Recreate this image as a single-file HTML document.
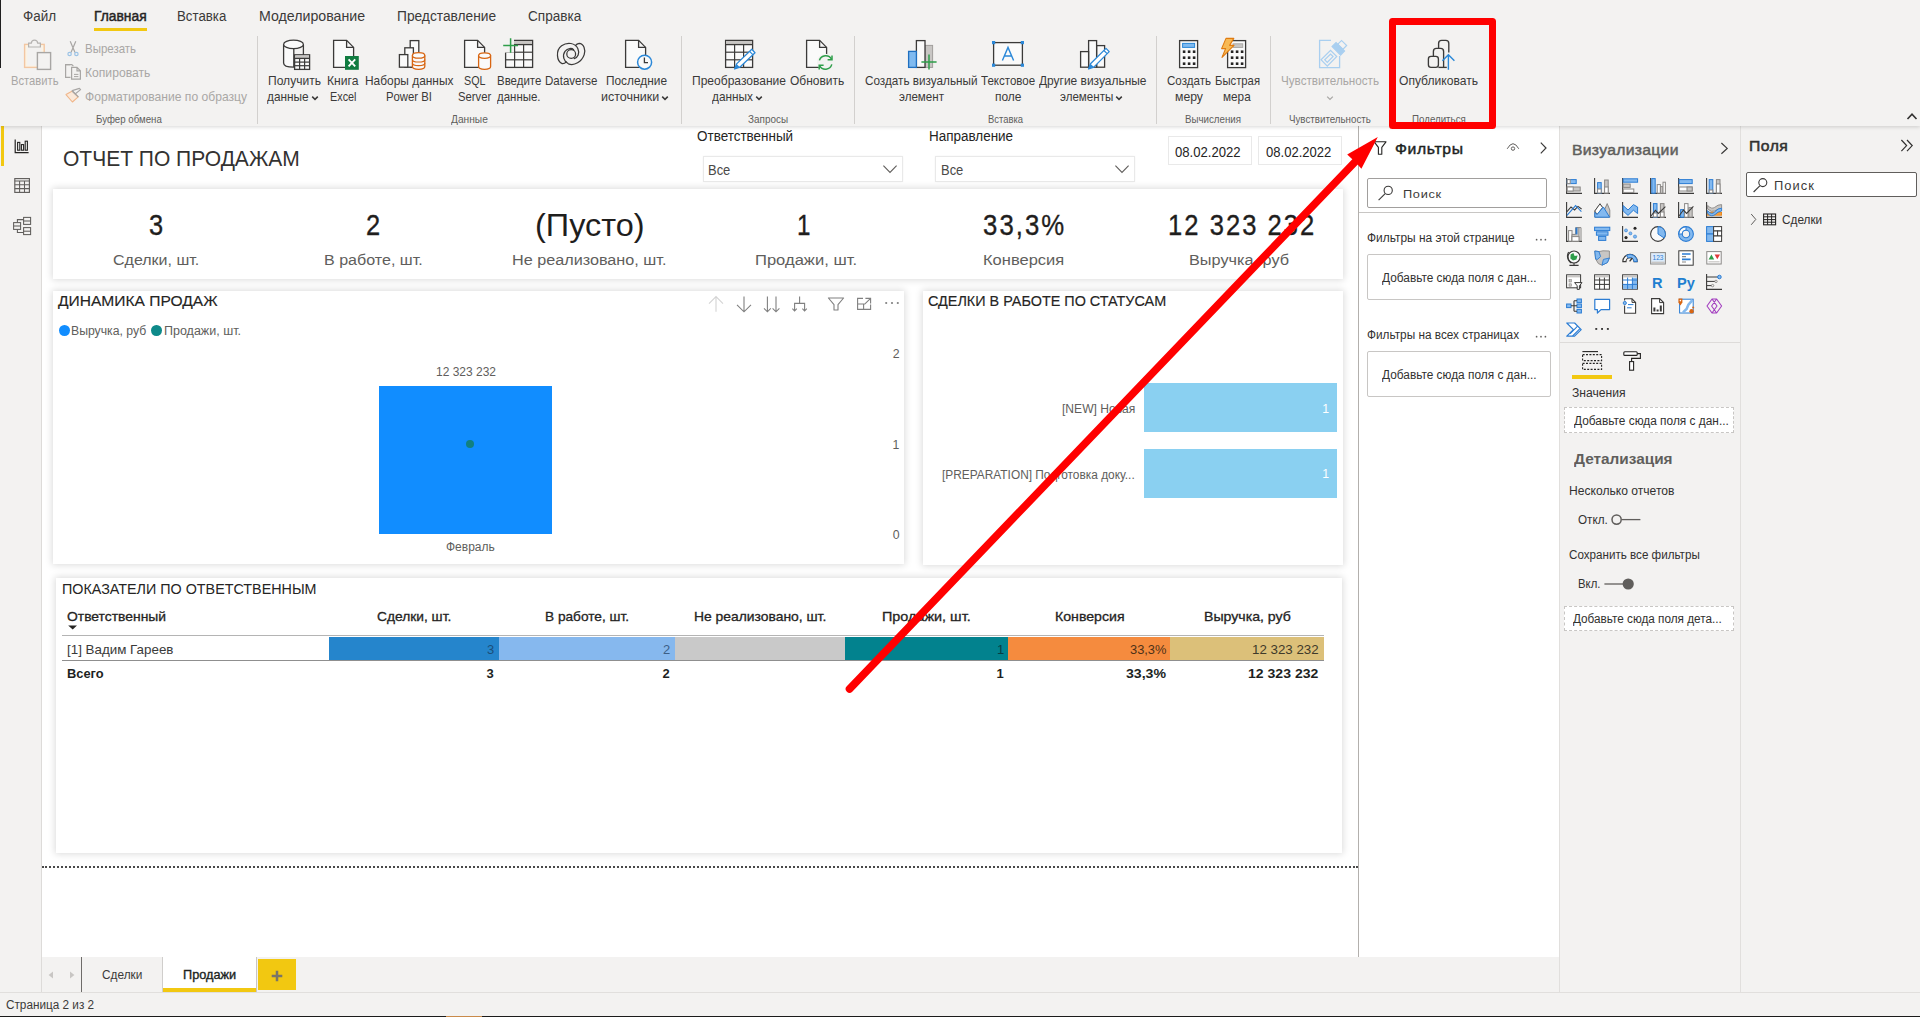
<!DOCTYPE html><html lang="ru"><head><meta charset="utf-8"><title>Power BI Desktop</title><style>
html,body{margin:0;padding:0}
body{width:1920px;height:1017px;overflow:hidden;position:relative;background:#f3f2f1;font-family:"Liberation Sans",sans-serif;}
.b{position:absolute;display:block}
.t{position:absolute;white-space:nowrap;transform-origin:0 0;z-index:10;-webkit-font-smoothing:antialiased}

</style></head><body>
<section id="report-canvas">
<div class="b" style="left:0px;top:126px;width:41px;height:866px;background:#f3f2f1;border-right:1px solid #dddbd9;"></div>
<div class="b" style="left:1px;top:126px;width:3px;height:40px;background:#f2c811;"></div>
<div class="b" style="left:42px;top:126px;width:1316px;height:831px;background:#ffffff;"></div>
<div class="b" style="left:1358px;top:126px;width:1px;height:831px;background:#b3b0ad;"></div>
<svg class="b" style="left:0;top:126px" width="42" height="120" viewBox="0 126 42 120"><path d="M15.2 139.6 V152.6 H28.6" fill="none" stroke="#252423" stroke-width="1.2"/><rect x="17.6" y="142.4" width="2.2" height="7.8" fill="none" stroke="#252423" stroke-width="1.1"/><rect x="21.4" y="144.6" width="2.2" height="5.6" fill="none" stroke="#252423" stroke-width="1.1"/><rect x="25.2" y="141.2" width="2.2" height="9.0" fill="none" stroke="#252423" stroke-width="1.1"/><rect x="14.8" y="178.6" width="14.6" height="13.8" fill="none" stroke="#605e5c" stroke-width="1.15"/><path d="M14.8 181 H29.4 M14.8 184.8 H29.4 M14.8 188.6 H29.4 M19.6 181 V192.4 M24.5 181 V192.4" stroke="#605e5c" stroke-width="1.05"/><g fill="none" stroke="#605e5c" stroke-width="1.05"><rect x="13.6" y="222.6" width="7" height="6.8"/><path d="M13.6 226 H20.6"/><rect x="23.6" y="217.4" width="7" height="7"/><path d="M23.6 221 H30.6"/><rect x="23.6" y="227.6" width="7" height="7"/><path d="M23.6 231.2 H30.6"/><path d="M17.4 222.6 V219.6 H23.6 M17.4 229.4 V232.4 H23.6"/></g></svg>
<div class="b" style="left:702.5px;top:155.5px;width:200px;height:26.5px;background:#fff;border:1px solid #e9e9e9;box-sizing:border-box;box-shadow:0 0 2px rgba(0,0,0,.05);"></div>
<div class="b" style="left:934.5px;top:155.5px;width:200px;height:26.5px;background:#fff;border:1px solid #e9e9e9;box-sizing:border-box;box-shadow:0 0 2px rgba(0,0,0,.05);"></div>
<svg class="b" style="left:882.4px;top:164px;" width="16" height="10" viewBox="0 0 16 10"><path d="M1.4 1.6 L8 8.4 L14.6 1.6" fill="none" stroke="#605e5c" stroke-width="1.1"/></svg>
<svg class="b" style="left:1114.4px;top:164px;" width="16" height="10" viewBox="0 0 16 10"><path d="M1.4 1.6 L8 8.4 L14.6 1.6" fill="none" stroke="#605e5c" stroke-width="1.1"/></svg>
<div class="b" style="left:1167.5px;top:136.3px;width:84px;height:29.2px;background:#fff;border:1px solid #e9e9e9;box-sizing:border-box;"></div>
<div class="b" style="left:1258px;top:136.3px;width:84px;height:29.2px;background:#fff;border:1px solid #e9e9e9;box-sizing:border-box;"></div>
<div class="b" style="left:53px;top:188.5px;width:1289.5px;height:90.8px;background:#fff;box-shadow:0 0 7px 1px rgba(0,0,0,.145);"></div>
<div class="b" style="left:53.3px;top:290.7px;width:851.1px;height:273.6px;background:#fff;box-shadow:0 0 7px 1px rgba(0,0,0,.145);"></div>
<div class="b" style="left:59px;top:325.2px;width:10.8px;height:10.8px;background:#118dff;border-radius:50%;"></div>
<div class="b" style="left:151.4px;top:325.2px;width:10.8px;height:10.8px;background:#0e8a8a;border-radius:50%;"></div>
<div class="b" style="left:378.8px;top:386.3px;width:173.6px;height:148.2px;background:#118dff;"></div>
<div class="b" style="left:466px;top:440px;width:8px;height:8px;background:#12807f;border-radius:50%;"></div>
<svg class="b" style="left:700px;top:292px" width="204" height="24" viewBox="700 292 204 24"><path d="M716 311.8 V296.6 M709 303.6 L716 296.6 L723 303.6" fill="none" stroke="#d4d4d4" stroke-width="1.1"/><path d="M744 296.6 V311.8 M737 304.8 L744 311.8 L751 304.8" fill="none" stroke="#808080" stroke-width="1.1"/><path d="M767.4 296.6 V311.8 M764.0 308.40000000000003 L767.4 311.8 L770.8 308.40000000000003" fill="none" stroke="#808080" stroke-width="1.1"/><path d="M776 296.6 V311.8 M772.6 308.40000000000003 L776 311.8 L779.4 308.40000000000003" fill="none" stroke="#808080" stroke-width="1.1"/><path d="M799.6 296.6 V303.4 M794.6 310.6 V303.4 H804.6 V310.6 M792.4 308.6 L794.6 311 L796.8 308.6 M802.4 308.6 L804.6 311 L806.8 308.6" fill="none" stroke="#808080" stroke-width="1.1"/><path d="M828.4 298 H843.6 L838 304.6 V310 H834 V304.6 Z" fill="none" stroke="#808080" stroke-width="1.1" stroke-linejoin="round"/><path d="M863 298.4 H857.6 V309.4 H870.6 V304.4 M857.6 304 H863.6 V309.4 M865.4 298.4 H870.6 V303.4 M870.6 298.4 L864.4 304.4" fill="none" stroke="#808080" stroke-width="1.1"/><circle cx="886.2" cy="303" r="1.1" fill="#808080"/><circle cx="892" cy="303" r="1.1" fill="#808080"/><circle cx="897.8" cy="303" r="1.1" fill="#808080"/></svg>
<div class="b" style="left:923px;top:290.5px;width:419.5px;height:274.5px;background:#fff;box-shadow:0 0 7px 1px rgba(0,0,0,.145);"></div>
<div class="b" style="left:1144px;top:383.3px;width:193.3px;height:49.2px;background:#8ad0f1;"></div>
<div class="b" style="left:1144px;top:448.8px;width:193.3px;height:49.5px;background:#8ad0f1;"></div>
<span class="t" id="t0" style="left:62.91px;top:148.01px;font-size:22.3px;line-height:22.3px;color:#333231;transform:scaleX(0.9421);">ОТЧЕТ ПО ПРОДАЖАМ</span>
<span class="t" id="t1" style="left:696.94px;top:129.00px;font-size:14px;line-height:14px;color:#252423;transform:scaleX(0.9614);">Ответственный</span>
<span class="t" id="t2" style="left:929.44px;top:129.00px;font-size:14px;line-height:14px;color:#252423;transform:scaleX(0.9617);">Направление</span>
<span class="t" id="t3" style="left:708.24px;top:163.00px;font-size:14px;line-height:14px;color:#4a4948;transform:scaleX(0.9252);">Все</span>
<span class="t" id="t4" style="left:940.74px;top:163.00px;font-size:14px;line-height:14px;color:#4a4948;transform:scaleX(0.9252);">Все</span>
<span class="t" id="t5" style="left:1174.94px;top:145.00px;font-size:14px;line-height:14px;color:#252423;transform:scaleX(0.9364);">08.02.2022</span>
<span class="t" id="t6" style="left:1265.74px;top:145.00px;font-size:14px;line-height:14px;color:#252423;transform:scaleX(0.9321);">08.02.2022</span>
<span class="t" id="t7" style="left:149.02px;top:210.01px;font-size:30.3px;line-height:30.3px;color:#1f1e1d;-webkit-text-stroke:0.35px #1f1e1d;transform:scaleX(0.8400);">3</span>
<span class="t" id="t8" style="left:366.22px;top:210.01px;font-size:30.3px;line-height:30.3px;color:#1f1e1d;-webkit-text-stroke:0.35px #1f1e1d;transform:scaleX(0.8400);">2</span>
<span class="t" id="t9" style="left:534.62px;top:209.01px;font-size:32px;line-height:32px;color:#1f1e1d;transform:scaleX(1.0140);">(Пусто)</span>
<span class="t" id="t10" style="left:797.36px;top:210.01px;font-size:30.3px;line-height:30.3px;color:#1f1e1d;-webkit-text-stroke:0.35px #1f1e1d;transform:scaleX(0.8000);">1</span>
<span class="t" id="t11" style="left:982.59px;top:210.01px;font-size:30.3px;line-height:30.3px;color:#1f1e1d;letter-spacing:2.4px;-webkit-text-stroke:0.35px #1f1e1d;transform:scaleX(0.8507);">33,3%</span>
<span class="t" id="t12" style="left:1167.59px;top:210.01px;font-size:30.3px;line-height:30.3px;color:#1f1e1d;letter-spacing:2.4px;-webkit-text-stroke:0.35px #1f1e1d;transform:scaleX(0.8442);">12 323 232</span>
<span class="t" id="t13" style="left:113.18px;top:252.00px;font-size:15.5px;line-height:15.5px;color:#605e5c;transform:scaleX(1.0320);">Сделки, шт.</span>
<span class="t" id="t14" style="left:324.38px;top:252.00px;font-size:15.5px;line-height:15.5px;color:#605e5c;transform:scaleX(1.0358);">В работе, шт.</span>
<span class="t" id="t15" style="left:512.38px;top:252.00px;font-size:15.5px;line-height:15.5px;color:#605e5c;transform:scaleX(1.0446);">Не реализовано, шт.</span>
<span class="t" id="t16" style="left:754.88px;top:252.00px;font-size:15.5px;line-height:15.5px;color:#605e5c;transform:scaleX(1.0688);">Продажи, шт.</span>
<span class="t" id="t17" style="left:982.68px;top:252.00px;font-size:15.5px;line-height:15.5px;color:#605e5c;transform:scaleX(1.0646);">Конверсия</span>
<span class="t" id="t18" style="left:1189.38px;top:252.00px;font-size:15.5px;line-height:15.5px;color:#605e5c;transform:scaleX(1.0491);">Выручка, руб</span>
<span class="t" id="t19" style="left:57.98px;top:293.00px;font-size:15.4px;line-height:15.4px;color:#252423;-webkit-text-stroke:0.15px #252423;transform:scaleX(1.0117);">ДИНАМИКА ПРОДАЖ</span>
<span class="t" id="t20" style="left:70.51px;top:325.01px;font-size:12.3px;line-height:12.3px;color:#605e5c;transform:scaleX(0.9951);">Выручка, руб</span>
<span class="t" id="t21" style="left:163.51px;top:325.01px;font-size:12.3px;line-height:12.3px;color:#605e5c;transform:scaleX(1.0163);">Продажи, шт.</span>
<span class="t" id="t22" style="left:435.51px;top:366.00px;font-size:12.3px;line-height:12.3px;color:#605e5c;transform:scaleX(0.9746);">12 323 232</span>
<span class="t" id="t23" style="left:446.01px;top:541.01px;font-size:12.3px;line-height:12.3px;color:#605e5c;transform:scaleX(0.9760);">Февраль</span>
<span class="t" id="t24" style="left:892.73px;top:348.01px;font-size:12.3px;line-height:12.3px;color:#605e5c;transform:scaleX(1.0000);">2</span>
<span class="t" id="t25" style="left:892.48px;top:439.01px;font-size:12.3px;line-height:12.3px;color:#605e5c;transform:scaleX(1.0000);">1</span>
<span class="t" id="t26" style="left:892.73px;top:529.00px;font-size:12.3px;line-height:12.3px;color:#605e5c;transform:scaleX(1.0000);">0</span>
<span class="t" id="t27" style="left:927.98px;top:293.00px;font-size:15.4px;line-height:15.4px;color:#252423;-webkit-text-stroke:0.15px #252423;transform:scaleX(0.9351);">СДЕЛКИ В РАБОТЕ ПО СТАТУСАМ</span>
<span class="t" id="t28" style="left:1061.71px;top:403.01px;font-size:12.3px;line-height:12.3px;color:#605e5c;transform:scaleX(0.9829);">[NEW] Новая</span>
<span class="t" id="t29" style="left:942.31px;top:469.01px;font-size:12.3px;line-height:12.3px;color:#605e5c;transform:scaleX(0.9663);">[PREPARATION] Подготовка доку...</span>
<span class="t" id="t30" style="left:1322.18px;top:403.01px;font-size:12.3px;line-height:12.3px;color:#ffffff;transform:scaleX(1.0000);">1</span>
<span class="t" id="t31" style="left:1322.18px;top:468.00px;font-size:12.3px;line-height:12.3px;color:#ffffff;transform:scaleX(1.0000);">1</span>
</section>
<section id="report-table-and-footer">
<div class="b" style="left:56px;top:578px;width:1286.3px;height:275px;background:#fff;box-shadow:0 0 7px 1px rgba(0,0,0,.145);"></div>
<svg class="b" style="left:68px;top:624.6px;" width="9.4" height="5" viewBox="0 0 9.4 5"><path d="M0.2 0.4 H9.2 L4.7 4.6 Z" fill="#252423"/></svg>
<div class="b" style="left:62px;top:635px;width:1262px;height:1.4px;background:#b4b4b4;"></div>
<div class="b" style="left:62px;top:660px;width:1262px;height:1.2px;background:#8f8f8f;"></div>
<div class="b" style="left:328.6px;top:636.6px;width:170.4px;height:23.4px;background:#2585cc;"></div>
<div class="b" style="left:499px;top:636.6px;width:176px;height:23.4px;background:#86b8ee;"></div>
<div class="b" style="left:675px;top:636.6px;width:169.8px;height:23.4px;background:#c9c9c9;"></div>
<div class="b" style="left:844.8px;top:636.6px;width:163.4px;height:23.4px;background:#02828e;"></div>
<div class="b" style="left:1008.2px;top:636.6px;width:162.2px;height:23.4px;background:#f58b3e;"></div>
<div class="b" style="left:1170.4px;top:636.6px;width:153.2px;height:23.4px;background:#dcc079;"></div>
<div class="b" style="left:42px;top:865.6px;width:1316px;height:2px;border-top:2px dotted #4a4a4a;box-sizing:border-box;height:0;"></div>
<div class="b" style="left:42px;top:957px;width:1517px;height:35px;background:#f3f2f1;"></div>
<div class="b" style="left:81px;top:957px;width:1px;height:35px;background:#6e6c6a;"></div>
<svg class="b" style="left:46px;top:970px;" width="10" height="10" viewBox="0 0 10 10"><path d="M7 1.4 L2.6 5 L7 8.6 Z" fill="#c8c6c4"/></svg>
<svg class="b" style="left:67px;top:970px;" width="10" height="10" viewBox="0 0 10 10"><path d="M3 1.4 L7.4 5 L3 8.6 Z" fill="#c8c6c4"/></svg>
<div class="b" style="left:162px;top:957px;width:1px;height:35px;background:#d0cecc;"></div>
<div class="b" style="left:163px;top:957px;width:93.4px;height:31px;background:#ffffff;"></div>
<div class="b" style="left:163px;top:988px;width:93.4px;height:3.6px;background:#f2c811;"></div>
<div class="b" style="left:256.4px;top:957px;width:1px;height:35px;background:#c8c6c4;"></div>
<div class="b" style="left:257.6px;top:959.4px;width:38.2px;height:31px;background:#f2c811;"></div>
<svg class="b" style="left:270.7px;top:969.6px;" width="12" height="12" viewBox="0 0 12 12"><path d="M6 0.7 V11.3 M0.7 6 H11.3" stroke="#7a7568" stroke-width="2.5"/></svg>
<div class="b" style="left:0px;top:992px;width:1920px;height:25px;background:#f3f2f1;border-top:1px solid #e1dfdd;box-sizing:border-box;"></div>
<div class="b" style="left:0px;top:1016px;width:1920px;height:1px;background:#1b1b1b;"></div>
<div class="b" style="left:446px;top:1016px;width:36px;height:1px;background:#c98a4a;"></div>
<span class="t" id="t32" style="left:61.63px;top:582.01px;font-size:14.3px;line-height:14.3px;color:#252423;transform:scaleX(1.0023);">ПОКАЗАТЕЛИ ПО ОТВЕТСТВЕННЫМ</span>
<span class="t" id="t33" style="left:67.46px;top:610.00px;font-size:13.4px;line-height:13.4px;color:#252423;-webkit-text-stroke:0.3px #252423;transform:scaleX(1.0359);">Ответственный</span>
<span class="t" id="t34" style="left:377.06px;top:610.00px;font-size:13.4px;line-height:13.4px;color:#252423;-webkit-text-stroke:0.3px #252423;transform:scaleX(1.0287);">Сделки, шт.</span>
<span class="t" id="t35" style="left:545.46px;top:610.00px;font-size:13.4px;line-height:13.4px;color:#252423;-webkit-text-stroke:0.3px #252423;transform:scaleX(1.0196);">В работе, шт.</span>
<span class="t" id="t36" style="left:694.06px;top:610.00px;font-size:13.4px;line-height:13.4px;color:#252423;-webkit-text-stroke:0.3px #252423;transform:scaleX(1.0357);">Не реализовано, шт.</span>
<span class="t" id="t37" style="left:882.46px;top:610.00px;font-size:13.4px;line-height:13.4px;color:#252423;-webkit-text-stroke:0.3px #252423;transform:scaleX(1.0750);">Продажи, шт.</span>
<span class="t" id="t38" style="left:1054.96px;top:610.00px;font-size:13.4px;line-height:13.4px;color:#252423;-webkit-text-stroke:0.3px #252423;transform:scaleX(1.0551);">Конверсия</span>
<span class="t" id="t39" style="left:1203.66px;top:610.00px;font-size:13.4px;line-height:13.4px;color:#252423;-webkit-text-stroke:0.3px #252423;transform:scaleX(1.0544);">Выручка, руб</span>
<span class="t" id="t40" style="left:67.48px;top:643.01px;font-size:13px;line-height:13px;color:#3a3a3a;transform:scaleX(1.0284);">[1] Вадим Гареев</span>
<span class="t" id="t41" style="left:486.98px;top:643.01px;font-size:13px;line-height:13px;color:#1c4f7a;transform:scaleX(1.0000);">3</span>
<span class="t" id="t42" style="left:662.88px;top:643.01px;font-size:13px;line-height:13px;color:#3d5f86;transform:scaleX(1.0000);">2</span>
<span class="t" id="t43" style="left:996.88px;top:643.01px;font-size:13px;line-height:13px;color:#083d44;transform:scaleX(1.0000);">1</span>
<span class="t" id="t44" style="left:1129.68px;top:643.01px;font-size:13px;line-height:13px;color:#4d3118;transform:scaleX(0.9882);">33,3%</span>
<span class="t" id="t45" style="left:1251.88px;top:643.01px;font-size:13px;line-height:13px;color:#403a2a;transform:scaleX(1.0240);">12 323 232</span>
<span class="t" id="t46" style="left:67.48px;top:667.01px;font-size:13px;line-height:13px;color:#201f1e;font-weight:700;transform:scaleX(0.9890);">Всего</span>
<span class="t" id="t47" style="left:486.58px;top:667.01px;font-size:13px;line-height:13px;color:#201f1e;font-weight:700;transform:scaleX(1.0000);">3</span>
<span class="t" id="t48" style="left:662.48px;top:667.01px;font-size:13px;line-height:13px;color:#201f1e;font-weight:700;transform:scaleX(1.0000);">2</span>
<span class="t" id="t49" style="left:996.38px;top:667.01px;font-size:13px;line-height:13px;color:#201f1e;font-weight:700;transform:scaleX(1.0000);">1</span>
<span class="t" id="t50" style="left:1126.08px;top:667.01px;font-size:13px;line-height:13px;color:#201f1e;font-weight:700;transform:scaleX(1.0858);">33,3%</span>
<span class="t" id="t51" style="left:1248.18px;top:667.01px;font-size:13px;line-height:13px;color:#201f1e;font-weight:700;transform:scaleX(1.0809);">12 323 232</span>
<span class="t" id="t52" style="left:101.51px;top:969.00px;font-size:12.3px;line-height:12.3px;color:#3b3a39;transform:scaleX(0.9633);">Сделки</span>
<span class="t" id="t53" style="left:182.51px;top:969.00px;font-size:12.3px;line-height:12.3px;color:#201f1e;-webkit-text-stroke:0.35px #201f1e;transform:scaleX(1.0336);">Продажи</span>
<span class="t" id="t54" style="left:5.71px;top:999.01px;font-size:12.3px;line-height:12.3px;color:#3b3a39;transform:scaleX(0.9556);">Страница 2 из 2</span>
</section>
<section id="side-panes">
<div class="b" style="left:1359px;top:126px;width:200.4px;height:831px;background:#ffffff;"></div>
<div class="b" style="left:1559.4px;top:126px;width:1px;height:866px;background:#e1dfdd;"></div>
<div class="b" style="left:1560.4px;top:126px;width:179.6px;height:866px;background:#f3f2f1;"></div>
<div class="b" style="left:1740px;top:126px;width:1px;height:866px;background:#e1dfdd;"></div>
<div class="b" style="left:1741px;top:126px;width:179px;height:866px;background:#f3f2f1;"></div>
<div class="b" style="left:1367.2px;top:178.4px;width:179.4px;height:29.2px;background:#fff;border:1px solid #a19f9d;border-radius:2px;box-sizing:border-box;"></div>
<div class="b" style="left:1359px;top:212px;width:200.4px;height:1px;background:#c8c6c4;"></div>
<div class="b" style="left:1367.2px;top:254.2px;width:183.8px;height:45.4px;background:#fff;border:1px solid #c8c6c4;border-radius:2px;box-sizing:border-box;"></div>
<div class="b" style="left:1367.2px;top:351.2px;width:183.8px;height:45.4px;background:#fff;border:1px solid #c8c6c4;border-radius:2px;box-sizing:border-box;"></div>
<svg class="b" style="left:1359px;top:126px" width="200" height="240" viewBox="1359 126 200 240"><path d="M1374.2 141.8 H1386 L1381.8 147.4 V154.2 H1378.4 V147.4 Z" fill="none" stroke="#252423" stroke-width="1.1" stroke-linejoin="round"/><path d="M1507.2 148.8 Q1513 138.6 1518.8 148.8" fill="none" stroke="#605e5c" stroke-width="1"/><circle cx="1513" cy="148.6" r="1.7" fill="none" stroke="#605e5c" stroke-width="1"/><path d="M1540.8 142.6 L1546 148 L1540.8 153.4" fill="none" stroke="#3b3a39" stroke-width="1.2"/><circle cx="1388.2" cy="190.4" r="4.1" fill="none" stroke="#3b3a39" stroke-width="1.1"/><path d="M1385.2 193.6 L1378.6 200.2" stroke="#3b3a39" stroke-width="1.1"/><circle cx="1536.6" cy="239.7" r=".85" fill="#605e5c"/><circle cx="1541" cy="239.7" r=".85" fill="#605e5c"/><circle cx="1545.4" cy="239.7" r=".85" fill="#605e5c"/><circle cx="1536.6" cy="336.7" r=".85" fill="#605e5c"/><circle cx="1541" cy="336.7" r=".85" fill="#605e5c"/><circle cx="1545.4" cy="336.7" r=".85" fill="#605e5c"/></svg>
<svg class="b" style="left:1560px;top:126px" width="180" height="480" viewBox="1560 126 180 480"><path d="M1721.4 143 L1727.2 148.4 L1721.4 153.8" fill="none" stroke="#3b3a39" stroke-width="1.2"/><g transform="translate(1566 178)"><path d="M.6 0 V15.4 H16" fill="none" stroke="#3b3a39" stroke-width="1.1"/><rect x="1.2" y="1.6" width="9" height="4" fill="#83b9ef" stroke="#2b7cd3" stroke-width="1"/><rect x="1.2" y="1.6" width="3" height="4" fill="#ffffff" stroke="#8a8886" stroke-width="1"/><rect x="1.2" y="9" width="13" height="4" fill="#c8c6c4" stroke="#8a8886" stroke-width="1"/><rect x="1.2" y="9" width="6" height="4" fill="#ffffff" stroke="#8a8886" stroke-width="1"/></g><g transform="translate(1594 178)"><path d="M.6 0 V15.4 H16" fill="none" stroke="#3b3a39" stroke-width="1.1"/><rect x="3.6" y="4.6" width="3.6" height="10.4" fill="#83b9ef" stroke="#2b7cd3" stroke-width="1"/><rect x="3.6" y="11" width="3.6" height="4" fill="#ffffff" stroke="#8a8886" stroke-width="1"/><rect x="10.6" y="2" width="3.6" height="13" fill="#c8c6c4" stroke="#8a8886" stroke-width="1"/><rect x="10.6" y="9" width="3.6" height="6" fill="#ffffff" stroke="#8a8886" stroke-width="1"/></g><g transform="translate(1622 178)"><path d="M.6 0 V15.4 H16" fill="none" stroke="#3b3a39" stroke-width="1.1"/><rect x="1.2" y="0.8" width="14.4" height="3.4" fill="#83b9ef" stroke="#2b7cd3" stroke-width="1"/><rect x="1.2" y="6" width="7" height="3.4" fill="#c8c6c4" stroke="#8a8886" stroke-width="1"/><rect x="1.2" y="11" width="10.6" height="3.4" fill="#ffffff" stroke="#8a8886" stroke-width="1"/></g><g transform="translate(1650 178)"><path d="M.6 0 V15.4 H16" fill="none" stroke="#3b3a39" stroke-width="1.1"/><rect x="1.8" y="0.6" width="3.4" height="14.6" fill="#83b9ef" stroke="#2b7cd3" stroke-width="1"/><rect x="7.2" y="6.6" width="3.2" height="8.6" fill="#ffffff" stroke="#8a8886" stroke-width="1"/><rect x="10.4" y="8.6" width="2.6" height="6.6" fill="#c8c6c4" stroke="#8a8886" stroke-width="1"/><rect x="13" y="4.2" width="2.4" height="11" fill="#ffffff" stroke="#8a8886" stroke-width="1"/></g><g transform="translate(1678 178)"><path d="M.6 0 V15.4 H16" fill="none" stroke="#3b3a39" stroke-width="1.1"/><rect x="1.2" y="1.6" width="13" height="4" fill="#83b9ef" stroke="#2b7cd3" stroke-width="1"/><rect x="1.2" y="9" width="13" height="4" fill="#ffffff" stroke="#8a8886" stroke-width="1"/><rect x="9" y="9" width="5.2" height="4" fill="#c8c6c4" stroke="#8a8886" stroke-width="1"/></g><g transform="translate(1706 178)"><path d="M.6 0 V15.4 H16" fill="none" stroke="#3b3a39" stroke-width="1.1"/><rect x="3.2" y="1.6" width="3.6" height="13.4" fill="#83b9ef" stroke="#2b7cd3" stroke-width="1"/><rect x="3.2" y="12" width="3.6" height="3" fill="#ffffff" stroke="#8a8886" stroke-width="1"/><rect x="10.4" y="1.6" width="3.6" height="13.4" fill="#c8c6c4" stroke="#8a8886" stroke-width="1"/><rect x="10.4" y="6" width="3.6" height="9" fill="#ffffff" stroke="#8a8886" stroke-width="1"/></g><g transform="translate(1566 202)"><path d="M.6 0 V15.4 H16" fill="none" stroke="#3b3a39" stroke-width="1.1"/><path d="M1 9.6 L5 5 L8.6 8 L12 4.4 L15.6 7" fill="none" stroke="#3b3a39" stroke-width="1.1"/><path d="M1 13.4 L9.6 3.6 L15.4 9.6" fill="none" stroke="#2b7cd3" stroke-width="1.1"/></g><g transform="translate(1594 202)"><path d="M.8 15.2 V9 L6 1.8 L10.4 8 L13.2 1.6 L15.8 8 V15.2 Z" fill="#c8c6c4" stroke="#8a8886" stroke-width="1"/><path d="M.8 9 L6 1.8 L8.6 5.6 L3 12.6 Z" fill="#ffffff" stroke="#3b3a39" stroke-width=".9"/><path d="M.8 15.2 V10.4 L3 12.6 L9.4 5 L15.6 15.2 Z" fill="#83b9ef" stroke="#2b7cd3" stroke-width="1"/></g><g transform="translate(1622 202)"><path d="M.6 0 V15.4 H16" fill="none" stroke="#3b3a39" stroke-width="1.1"/><path d="M1.2 3.6 L6 8 L11.4 2.6 L15.6 5 V11.6 L11.4 8.2 L6 13.4 L1.2 9 Z" fill="#83b9ef" stroke="#2b7cd3" stroke-width="1"/></g><g transform="translate(1650 202)"><path d="M.6 0 V15.4 H16" fill="none" stroke="#3b3a39" stroke-width="1.1"/><rect x="3.4" y="1.6" width="3.6" height="13.6" fill="#83b9ef" stroke="#2b7cd3" stroke-width="1"/><rect x="3.4" y="11" width="3.6" height="4" fill="#ffffff" stroke="#8a8886" stroke-width="1"/><rect x="10.4" y="1.6" width="3.6" height="13.6" fill="#c8c6c4" stroke="#8a8886" stroke-width="1"/><rect x="10.4" y="10" width="3.6" height="5" fill="#ffffff" stroke="#8a8886" stroke-width="1"/><path d="M1 14 L5.4 8.4 L8.4 11.4 L15.4 4.6" fill="none" stroke="#3b3a39" stroke-width="1.1"/></g><g transform="translate(1678 202)"><path d="M.6 0 V15.4 H16" fill="none" stroke="#3b3a39" stroke-width="1.1"/><rect x="2.6" y="7.6" width="3.6" height="7.6" fill="#83b9ef" stroke="#2b7cd3" stroke-width="1"/><rect x="6.6" y="1.6" width="3.4" height="13.6" fill="#ffffff" stroke="#8a8886" stroke-width="1"/><rect x="10.8" y="5.6" width="3.4" height="9.6" fill="#c8c6c4" stroke="#8a8886" stroke-width="1"/><path d="M1 14 L5.4 8 L8.6 11.4 L15.4 4.4" fill="none" stroke="#3b3a39" stroke-width="1.1"/></g><g transform="translate(1706 202)"><path d="M.6 0 V15.4 H16" fill="none" stroke="#3b3a39" stroke-width="1.1"/><path d="M1.6 3.4 Q5.6 7.6 8.6 5.4 Q12 2.4 15.6 2.6 V6.4 Q12 6.6 8.6 9 Q5.4 10.6 1.6 7 Z" fill="#c8c6c4" stroke="#8a8886" stroke-width=".9"/><rect x="1.6" y="10.2" width="14" height="3" fill="#f7a03c" stroke="#e07b10" stroke-width=".8"/><path d="M1.6 8.6 Q5.6 13.4 8.6 10 Q12 6 15.6 6.2 V9 Q12 9.4 9 12.6 Q5.4 15.4 1.6 11.4 Z" fill="#83b9ef" stroke="#2b7cd3" stroke-width=".9"/></g><g transform="translate(1566 226)"><path d="M.6 0 V15.4 H16" fill="none" stroke="#3b3a39" stroke-width="1.1"/><rect x="2.6" y="4.6" width="3.4" height="10.6" fill="#ffffff" stroke="#8a8886" stroke-width="1"/><path d="M6 15.2 V8.4 H9.6 V1.6 H13 V15.2" fill="#c8c6c4" stroke="#8a8886" stroke-width="1"/><rect x="9.6" y="1.6" width="1.8" height="6.8" fill="#2b7cd3"/><rect x="6" y="10.6" width="7" height="4.6" fill="#ffffff" stroke="#8a8886" stroke-width="1"/><path d="M13 1.6 H15 V15.2" fill="none" stroke="#8a8886" stroke-width="1"/></g><g transform="translate(1594 226)"><rect x="0.6" y="1.2" width="15.2" height="3.4" fill="#83b9ef" stroke="#2b7cd3" stroke-width="1"/><rect x="2.4" y="5.8" width="11.6" height="3.4" fill="#83b9ef" stroke="#2b7cd3" stroke-width="1"/><rect x="4.6" y="10.4" width="7.2" height="4" fill="#83b9ef" stroke="#2b7cd3" stroke-width="1"/></g><g transform="translate(1622 226)"><path d="M.6 0 V15.4 H16" fill="none" stroke="#3b3a39" stroke-width="1.1"/><circle cx="4" cy="4.4" r="1.5" fill="#83b9ef" stroke="#2b7cd3" stroke-width=".6"/><circle cx="8.4" cy="7.4" r="1.5" fill="#83b9ef" stroke="#2b7cd3" stroke-width=".6"/><circle cx="13" cy="10.6" r="1.6" fill="#83b9ef" stroke="#2b7cd3" stroke-width=".6"/><circle cx="13" cy="2.2" r="1.5" fill="#252423"/><circle cx="4" cy="11.6" r="1.6" fill="#252423"/></g><g transform="translate(1650 226)"><circle cx="8" cy="8" r="7.4" fill="#fafafa" stroke="#3b3a39" stroke-width="1.1"/><path d="M8 8 V.6 A7.4 7.4 0 0 1 14.2 12 Z" fill="#83b9ef" stroke="#2b7cd3" stroke-width="1"/></g><g transform="translate(1678 226)"><circle cx="8" cy="8" r="5.5" fill="none" stroke="#83b9ef" stroke-width="3.6"/><path d="M8 .6 A7.4 7.4 0 0 0 .6 8 H4.2 A3.8 3.8 0 0 1 8 4.2 Z" fill="#fafafa" stroke="#2b7cd3" stroke-width=".9"/><circle cx="8" cy="8" r="7.4" fill="none" stroke="#2b7cd3" stroke-width="1.1"/><circle cx="8" cy="8" r="3.7" fill="#f3f2f1" stroke="#2b7cd3" stroke-width="1.1"/></g><g transform="translate(1706 226)"><rect x="0.6" y="0.6" width="7" height="7.4" fill="#83b9ef" stroke="#2b7cd3" stroke-width="1"/><rect x="0.6" y="8" width="7" height="7.4" fill="#83b9ef" stroke="#2b7cd3" stroke-width="1"/><rect x="7.6" y="0.6" width="8" height="4.4" fill="#ffffff" stroke="#3b3a39" stroke-width="1"/><rect x="7.6" y="5" width="4" height="5" fill="#ffffff" stroke="#3b3a39" stroke-width="1"/><rect x="11.6" y="5" width="4" height="5" fill="#ffffff" stroke="#3b3a39" stroke-width="1"/><rect x="7.6" y="10" width="8" height="5.4" fill="#ffffff" stroke="#3b3a39" stroke-width="1"/></g><g transform="translate(1566 250)"><circle cx="8" cy="7" r="6" fill="#fafafa" stroke="#3b3a39" stroke-width="1.1"/><path d="M4.6 4.6 L7.4 3 L8.6 6 L11.6 5.4 L10.4 9.4 L7 10.6 L4.4 8.6 Z" fill="#2e9e4a"/><path d="M3.4 15.4 H12.6 M8 13 V15.4 M2.6 2 Q-.6 8 5 13" fill="none" stroke="#3b3a39" stroke-width="1.1"/></g><g transform="translate(1594 250)"><path d="M.8 1 L5 1.6 L9 .8 L15.4 1 V8 L13.4 12.6 L8 15.2 L4.4 13.6 L1.6 9 Z" fill="#c8c6c4" stroke="#8a8886" stroke-width=".9"/><path d="M.8 1 L5 1.6 L6.6 6.6 L3.4 9.4 L1.6 9 Z M8 15.2 L9.4 9.4 L15.4 8 L13.4 12.6 Z" fill="#83b9ef" stroke="#2b7cd3" stroke-width=".9"/></g><g transform="translate(1622 250)"><path d="M.8 11.6 A7.2 7.2 0 0 1 15.2 11.6 H12 A4 4 0 0 0 4 11.6 Z" fill="#fafafa" stroke="#3b3a39" stroke-width="1.1"/><path d="M4.6 5.4 A7.2 7.2 0 0 1 15.2 11.6 H12 A4 4 0 0 0 6.2 8 Z" fill="#83b9ef" stroke="#2b7cd3" stroke-width="1"/><path d="M7.6 11.4 L10.4 8" stroke="#3b3a39" stroke-width="1.4"/></g><g transform="translate(1650 250)"><rect x="0.6" y="2.6" width="14.8" height="11.4" fill="#dcebfa" stroke="#8a8886" stroke-width="1"/><rect x="1.4" y="11.6" width="13.2" height="1.8" fill="#c8c6c4"/><text x="8" y="10" font-size="7.4" text-anchor="middle" fill="#2b7cd3" font-family="Liberation Sans, sans-serif" textLength="11" lengthAdjust="spacingAndGlyphs">123</text></g><g transform="translate(1678 250)"><rect x="0.8" y="0.8" width="14.4" height="14.4" fill="#ffffff" stroke="#3b3a39" stroke-width="1"/><path d="M4 4 H12.6 M4 9.4 H12.6" stroke="#2b7cd3" stroke-width="1.6"/><path d="M4 6.6 H8 M4 12 H8" stroke="#8a8886" stroke-width="1.2"/></g><g transform="translate(1706 250)"><rect x="0.8" y="1.6" width="14.4" height="12.4" fill="#ffffff" stroke="#8a8886" stroke-width="1"/><path d="M2.6 9.4 L5.4 4.6 L8.2 9.4 Z" fill="#2e9e4a"/><path d="M8.6 4.6 H14 L11.3 9.2 Z" fill="#e03a3a"/><path d="M2.4 11.8 H13.6" stroke="#c8c6c4" stroke-width="1.2"/></g><g transform="translate(1566 274)"><rect x="0.6" y="0.8" width="14" height="13" fill="#ffffff" stroke="#3b3a39" stroke-width="1"/><rect x="1.2" y="1.4" width="12.8" height="2" fill="#c8c6c4"/><rect x="3" y="5.6" width="2.4" height="2.4" fill="#c8c6c4" stroke="#8a8886" stroke-width=".6"/><rect x="3" y="9.8" width="2.4" height="2.4" fill="#c8c6c4" stroke="#8a8886" stroke-width=".6"/><path d="M8.6 8.6 H16 L13.4 11.8 V15.4 H11.2 V11.8 Z" fill="#fff" stroke="#3b3a39" stroke-width="1"/></g><g transform="translate(1594 274)"><rect x="0.6" y="0.8" width="14.8" height="14.4" fill="#ffffff" stroke="#3b3a39" stroke-width="1"/><rect x="1.2" y="1.4" width="13.6" height="2" fill="#c8c6c4"/><path d="M.6 6 H15.4 M.6 10.4 H15.4 M5.6 3.6 V15.2 M10.4 3.6 V15.2" stroke="#3b3a39" stroke-width="1"/></g><g transform="translate(1622 274)"><rect x="0.6" y="0.8" width="14.8" height="14.4" fill="#ffffff" stroke="#3b3a39" stroke-width="1"/><rect x="1.2" y="1.4" width="13.6" height="2" fill="#c8c6c4"/><rect x="1" y="10.6" width="14" height="4.2" fill="#83b9ef"/><rect x="10.6" y="3.8" width="4.4" height="11" fill="#83b9ef"/><path d="M.6 6 H15.4 M.6 10.4 H15.4 M5.6 3.6 V15.2 M10.4 3.6 V15.2" stroke="#2b7cd3" stroke-width="1"/></g><g transform="translate(1706 274)"><path d="M.6 0 V15.4 H16" fill="none" stroke="#3b3a39" stroke-width="1.1"/><path d="M1 3 H12 M1 7.4 H9 M1 11.6 H5.6" stroke="#3b3a39" stroke-width="1"/><circle cx="13.4" cy="3" r="1.8" fill="#83b9ef" stroke="#2b7cd3" stroke-width="1"/><circle cx="10" cy="7.4" r="1.2" fill="none" stroke="#8a8886" stroke-width=".9"/><circle cx="6.6" cy="11.6" r="1.2" fill="none" stroke="#8a8886" stroke-width=".9"/></g><g transform="translate(1566 298)"><rect x="0.6" y="6" width="4.4" height="3.6" fill="#83b9ef" stroke="#2b7cd3" stroke-width="1"/><rect x="11" y="1" width="4.4" height="3.6" fill="#83b9ef" stroke="#2b7cd3" stroke-width="1"/><rect x="11" y="6" width="4.4" height="3.6" fill="#83b9ef" stroke="#2b7cd3" stroke-width="1"/><rect x="11" y="11.4" width="4.4" height="3.6" fill="#83b9ef" stroke="#2b7cd3" stroke-width="1"/><path d="M5 7.8 H11 M8 2.8 H11 M8 13.2 H11 M8 2.8 V13.2" fill="none" stroke="#3b3a39" stroke-width="1.1"/></g><g transform="translate(1594 298)"><path d="M.8 1.4 H15.6 V11.6 H7 L3.4 15 V11.6 H.8 Z" fill="#fff" stroke="#2b7cd3" stroke-width="1.2" stroke-linejoin="round"/></g><g transform="translate(1622 298)"><path d="M2.6 2.6 V.8 H10 L13.6 4.4 V15.2 H2.6 V7.4" fill="#fff" stroke="#3b3a39" stroke-width="1.1"/><path d="M10 .8 V4.4 H13.6" fill="none" stroke="#3b3a39" stroke-width="1"/><circle cx="2.8" cy="5" r="1.6" fill="#83b9ef" stroke="#2b7cd3" stroke-width=".9"/><path d="M6 6.6 H11.4 M5 9.8 H9.6" stroke="#2b7cd3" stroke-width="1"/></g><g transform="translate(1650 298)"><path d="M1.6 .6 H9.6 L13.6 4.6 V15.6 H1.6 Z" fill="#fff" stroke="#3b3a39" stroke-width="1.1"/><path d="M9.6 .6 V4.6 H13.6" fill="none" stroke="#3b3a39" stroke-width="1"/><path d="M4.4 13.6 V9.6 M7.6 13.6 V11.4 M10.8 13.6 V7.4" stroke="#3b3a39" stroke-width="2"/></g><g transform="translate(1678 298)"><rect x="1.6" y="1.2" width="13.6" height="13.8" fill="#ffffff" stroke="#2b7cd3" stroke-width="1"/><path d="M14.6 2 L10.4 6.6 L8.6 11 L5 14.4" fill="none" stroke="#83b9ef" stroke-width="2.6"/><path d="M.4 .4 H4.4 V4.4 L2.4 7.4 L.4 4.4 Z" fill="#d86613"/><circle cx="2.4" cy="2.6" r=".8" fill="#fff"/><circle cx="13.6" cy="13.2" r="2.2" fill="#d86613"/><circle cx="15.2" cy="9.4" r="1" fill="#d86613"/></g><g transform="translate(1706 298)"><path d="M6 1 L1 8 L6 15 H10.6 L15.6 8 L10.6 1 Z M6 1 L11 8 L6 15 M10.6 1 L5.6 8 L10.6 15" fill="none" stroke="#a33fc0" stroke-width="1.1" stroke-linejoin="round" transform="rotate(0)"/></g><g transform="translate(1566 322)"><path d="M.8 1 H8.6 L15.2 7.6 L8.6 14.2 H.8 L7.4 7.6 Z" fill="#fff" stroke="#2b7cd3" stroke-width="1.2" stroke-linejoin="round"/><path d="M11.6 4.2 L4 11.8 M14 6.6 L6.6 14" stroke="#2b7cd3" stroke-width="1.1"/></g><rect x="1595.3" y="328" width="1.9" height="1.9" fill="#3b3a39"/><rect x="1601.1" y="328" width="1.9" height="1.9" fill="#3b3a39"/><rect x="1606.8999999999999" y="328" width="1.9" height="1.9" fill="#3b3a39"/><path d="M1582.4 351.6 H1598" stroke="#252423" stroke-width="1.1"/><rect x="1582.6" y="354.6" width="19" height="6" fill="none" stroke="#252423" stroke-width="1.1" stroke-dasharray="2 1.4"/><rect x="1582.6" y="363.4" width="19" height="6" fill="none" stroke="#252423" stroke-width="1.1" stroke-dasharray="2 1.4"/><rect x="1623.8" y="351.8" width="13.4" height="3.6" rx="1" fill="#fff" stroke="#252423" stroke-width="1.1"/><path d="M1637.2 353.6 H1640.4 V358.4 H1631.6 V361.6" fill="none" stroke="#252423" stroke-width="1.1"/><rect x="1629.6" y="361.6" width="4" height="8.6" fill="#fff" stroke="#252423" stroke-width="1.1"/><path d="M1621.4 519.6 H1640.4" stroke="#605e5c" stroke-width="1.3"/><circle cx="1616.6" cy="519.6" r="4.6" fill="#f3f2f1" stroke="#605e5c" stroke-width="1.5"/><path d="M1604.4 584 H1624" stroke="#605e5c" stroke-width="1.3"/><circle cx="1628.2" cy="584" r="5.6" fill="#605e5c"/></svg>
<div class="b" style="left:1560.4px;top:342px;width:179.6px;height:1px;background:#dddbd9;"></div>
<div class="b" style="left:1572px;top:375.2px;width:40px;height:3.8px;background:#f2c811;"></div>
<div class="b" style="left:1564.4px;top:406.6px;width:169.6px;height:26.8px;background:#fff;border:1px dashed #c8c6c4;box-sizing:border-box;"></div>
<div class="b" style="left:1564.4px;top:606.2px;width:169.6px;height:24.8px;background:#fff;border:1px dashed #c8c6c4;box-sizing:border-box;"></div>
<div class="b" style="left:1745.6px;top:171.6px;width:171px;height:25.6px;background:#fff;border:1px solid #605e5c;border-radius:2px;box-sizing:border-box;"></div>
<svg class="b" style="left:1741px;top:126px" width="179" height="110" viewBox="1741 126 179 110"><path d="M1901.4 140 L1906.6 145.6 L1901.4 151.2 M1907 140 L1912.2 145.6 L1907 151.2" fill="none" stroke="#323130" stroke-width="1.2"/><circle cx="1762.8" cy="182.6" r="4" fill="none" stroke="#3b3a39" stroke-width="1.1"/><path d="M1759.8 185.8 L1753.6 192" stroke="#3b3a39" stroke-width="1.1"/><path d="M1751.2 214 L1755.8 219.4 L1751.2 224.8" fill="none" stroke="#605e5c" stroke-width="1"/><rect x="1763.6" y="214" width="12" height="10.8" fill="none" stroke="#252423" stroke-width="1.1"/><path d="M1763.6 216.8 H1775.6 M1763.6 219.6 H1775.6 M1763.6 222.2 H1775.6 M1767.6 214 V224.8 M1771.6 214 V224.8" stroke="#252423" stroke-width="1"/></svg>
<span class="t" id="t55" style="left:1394.82px;top:142.01px;font-size:14.6px;line-height:14.6px;color:#201f1e;letter-spacing:0.616px;-webkit-text-stroke:0.42px #201f1e;transform:scaleX(1.0752);">Фильтры</span>
<span class="t" id="t56" style="left:1403.13px;top:189.00px;font-size:11.8px;line-height:11.8px;color:#3b3a39;letter-spacing:0.655px;transform:scaleX(1.0799);">Поиск</span>
<span class="t" id="t57" style="left:1366.71px;top:232.00px;font-size:12.3px;line-height:12.3px;color:#323130;transform:scaleX(0.9709);">Фильтры на этой странице</span>
<span class="t" id="t58" style="left:1381.51px;top:272.01px;font-size:12.3px;line-height:12.3px;color:#323130;transform:scaleX(0.9645);">Добавьте сюда поля с дан...</span>
<span class="t" id="t59" style="left:1366.71px;top:329.01px;font-size:12.3px;line-height:12.3px;color:#323130;transform:scaleX(0.9599);">Фильтры на всех страницах</span>
<span class="t" id="t60" style="left:1381.51px;top:369.00px;font-size:12.3px;line-height:12.3px;color:#323130;transform:scaleX(0.9645);">Добавьте сюда поля с дан...</span>
<span class="t" id="t61" style="left:1572.11px;top:143.00px;font-size:14.7px;line-height:14.7px;color:#605e5c;letter-spacing:0.269px;-webkit-text-stroke:0.45px #605e5c;transform:scaleX(1.0714);">Визуализации</span>
<span class="t" id="t62" style="left:1651.88px;top:276.00px;font-size:14.6px;line-height:14.6px;color:#1f7fd0;font-weight:700;transform:scaleX(1.0000);">R</span>
<span class="t" id="t63" style="left:1676.82px;top:276.00px;font-size:14.6px;line-height:14.6px;color:#1f7fd0;font-weight:700;transform:scaleX(1.0005);">Py</span>
<span class="t" id="t64" style="left:1571.51px;top:387.00px;font-size:12.3px;line-height:12.3px;color:#323130;transform:scaleX(0.9857);">Значения</span>
<span class="t" id="t65" style="left:1574.31px;top:415.01px;font-size:12.3px;line-height:12.3px;color:#323130;transform:scaleX(0.9658);">Добавьте сюда поля с дан...</span>
<span class="t" id="t66" style="left:1573.61px;top:452.01px;font-size:14.7px;line-height:14.7px;color:#605e5c;font-weight:700;transform:scaleX(1.0459);">Детализация</span>
<span class="t" id="t67" style="left:1569.21px;top:485.00px;font-size:12.3px;line-height:12.3px;color:#323130;transform:scaleX(0.9838);">Несколько отчетов</span>
<span class="t" id="t68" style="left:1577.51px;top:514.01px;font-size:12.3px;line-height:12.3px;color:#323130;transform:scaleX(0.9512);">Откл.</span>
<span class="t" id="t69" style="left:1569.21px;top:549.01px;font-size:12.3px;line-height:12.3px;color:#323130;transform:scaleX(0.9460);">Сохранить все фильтры</span>
<span class="t" id="t70" style="left:1577.51px;top:578.01px;font-size:12.3px;line-height:12.3px;color:#323130;transform:scaleX(0.9207);">Вкл.</span>
<span class="t" id="t71" style="left:1572.81px;top:613.01px;font-size:12.3px;line-height:12.3px;color:#323130;transform:scaleX(0.9547);">Добавьте сюда поля дета...</span>
<span class="t" id="t72" style="left:1748.92px;top:139.01px;font-size:14.6px;line-height:14.6px;color:#323130;letter-spacing:0.463px;-webkit-text-stroke:0.5px #323130;transform:scaleX(1.0769);">Поля</span>
<span class="t" id="t73" style="left:1774.12px;top:181.01px;font-size:11.9px;line-height:11.9px;color:#3b3a39;letter-spacing:0.974px;transform:scaleX(1.0841);">Поиск</span>
<span class="t" id="t74" style="left:1781.51px;top:214.01px;font-size:12.3px;line-height:12.3px;color:#323130;transform:scaleX(0.9585);">Сделки</span>
</section>
<section id="ribbon">
<div class="b" style="left:0px;top:0px;width:1920px;height:126px;background:#f3f2f1;box-shadow:0 1px 4px rgba(0,0,0,.16);z-index:5;"></div>
<div class="b" style="left:94px;top:28px;width:53px;height:3px;background:#f2c811;z-index:6;"></div>
<div class="b" style="left:257px;top:36px;width:1px;height:88px;background:#d2d0ce;z-index:6;"></div>
<div class="b" style="left:681px;top:36px;width:1px;height:88px;background:#d2d0ce;z-index:6;"></div>
<div class="b" style="left:854px;top:36px;width:1px;height:88px;background:#d2d0ce;z-index:6;"></div>
<div class="b" style="left:1156px;top:36px;width:1px;height:88px;background:#d2d0ce;z-index:6;"></div>
<div class="b" style="left:1270px;top:36px;width:1px;height:88px;background:#d2d0ce;z-index:6;"></div>
<svg class="b" style="left:309.6px;top:94px;z-index:7;" width="10" height="8" viewBox="0 0 10 8"><path d="M2.2 2.6 L5 5.4 L7.8 2.6" fill="none" stroke="#3b3a39" stroke-width="1.5"/></svg>
<svg class="b" style="left:659.8px;top:94px;z-index:7;" width="10" height="8" viewBox="0 0 10 8"><path d="M2.2 2.6 L5 5.4 L7.8 2.6" fill="none" stroke="#3b3a39" stroke-width="1.5"/></svg>
<svg class="b" style="left:753.5px;top:94px;z-index:7;" width="10" height="8" viewBox="0 0 10 8"><path d="M2.2 2.6 L5 5.4 L7.8 2.6" fill="none" stroke="#3b3a39" stroke-width="1.5"/></svg>
<svg class="b" style="left:1113.5px;top:94px;z-index:7;" width="10" height="8" viewBox="0 0 10 8"><path d="M2.2 2.6 L5 5.4 L7.8 2.6" fill="none" stroke="#3b3a39" stroke-width="1.5"/></svg>
<svg class="b" style="left:1324.5px;top:93.5px;z-index:7;" width="10" height="8" viewBox="0 0 10 8"><path d="M2.2 2.6 L5 5.4 L7.8 2.6" fill="none" stroke="#a9a7a5" stroke-width="1.3"/></svg>
<svg class="b" style="left:1906px;top:112px;z-index:7;" width="12" height="9" viewBox="0 0 12 9"><path d="M1.5 7 L6 2.2 L10.5 7" fill="none" stroke="#323130" stroke-width="1.6"/></svg>
<div class="b" style="left:0px;top:0px;width:1.2px;height:68.4px;background:#1f1f1f;z-index:8;"></div>
<svg class="b" style="left:0;top:0;z-index:7" width="1920" height="125" viewBox="0 0 1920 125"><rect x="24.6" y="44.4" width="19.6" height="23" fill="#fbf3e4" stroke="#f3c7a2" stroke-width="1.4"/><rect x="27.2" y="46.6" width="14.4" height="19" fill="#f3f2f1"/><path d="M28.6 47 V43.2 H31.3 Q31.6 40.2 34.5 40.2 Q37.4 40.2 37.7 43.2 H40.4 V47 Z" fill="#f3f2f1" stroke="#b5b3b1" stroke-width="1.2"/><rect x="37.4" y="52.6" width="13.2" height="16.8" fill="#f3f2f1" stroke="#a8a6a4" stroke-width="1.4"/><path d="M70.2 41.2 L75 52.4 M75.8 41.2 L71 52.4" stroke="#a8a6a4" stroke-width="1.2" fill="none"/><circle cx="69.6" cy="54" r="1.7" fill="none" stroke="#9cc3e6" stroke-width="1.2"/><circle cx="76.4" cy="54" r="1.7" fill="none" stroke="#9cc3e6" stroke-width="1.2"/><path d="M70 64.6 H65.6 V77.4 H70.5" fill="none" stroke="#a8a6a4" stroke-width="1.2"/><path d="M71.6 67.4 H77 L80.4 70.8 V79.2 H71.6 Z M77 67.4 V70.8 H80.4" fill="#f3f2f1" stroke="#a8a6a4" stroke-width="1.2"/><path d="M74 74.4 H78.4 M74 76.6 H78.4" stroke="#a8a6a4" stroke-width="1"/><path d="M65.6 64.6 H71.8 L73.4 66.2" fill="none" stroke="#a8a6a4" stroke-width="1.2"/><path d="M66 94.6 L72.4 91 L78.2 96.8 L72.4 102 Z" fill="#fbe9d9" stroke="#f0b68a" stroke-width="1.1" stroke-linejoin="round"/><path d="M72.2 90.6 L75.4 93.8 L80.6 89.6 L79.4 88.4 Z" fill="#f3f2f1" stroke="#a8a6a4" stroke-width="1.1" stroke-linejoin="round"/><path d="M72 91 L78.4 97" stroke="#a8a6a4" stroke-width="1.2"/><path d="M283.6 44.4 V63 Q283.6 67.2 293.8 67.2 V44.4" fill="#fafafa" stroke="#3b3a39" stroke-width="1.3"/><path d="M303.4 44.4 V55" fill="none" stroke="#3b3a39" stroke-width="1.3"/><ellipse cx="293.5" cy="44.4" rx="9.9" ry="4.2" fill="#fafafa" stroke="#3b3a39" stroke-width="1.3"/><rect x="294.6" y="54.8" width="15.0" height="14.600000000000009" fill="#fafafa" stroke="#3b3a39" stroke-width="1.3"/><rect x="295.20000000000005" y="55.4" width="13.8" height="3" fill="#c8c6c4"/><path d="M294.6 58.4 H309.6" stroke="#3b3a39" stroke-width="1.3"/><path d="M299.6 58.4 V69.4" stroke="#3b3a39" stroke-width="1.2"/><path d="M304.6 58.4 V69.4" stroke="#3b3a39" stroke-width="1.2"/><path d="M294.6 62.1 H309.6" stroke="#3b3a39" stroke-width="1.2"/><path d="M294.6 65.7 H309.6" stroke="#3b3a39" stroke-width="1.2"/><path d="M333.6 40.4 H346.6 L353.6 47.4 V67.4 H333.6 Z" fill="#fafafa" stroke="#3b3a39" stroke-width="1.3"/><path d="M346.6 40.4 V47.4 H353.6" fill="none" stroke="#3b3a39" stroke-width="1.3"/><rect x="345" y="56" width="13.8" height="13.8" fill="#107c41"/><path d="M348.6 59.4 L355.2 66.4 M355.2 59.4 L348.6 66.4" stroke="#fff" stroke-width="1.9"/><rect x="410.2" y="40.6" width="8.6" height="26.6" fill="#fafafa" stroke="#3b3a39" stroke-width="1.3"/><rect x="404.8" y="47.8" width="8.6" height="19.4" fill="#fafafa" stroke="#3b3a39" stroke-width="1.3"/><rect x="399.4" y="54.6" width="8.4" height="12.6" fill="#fafafa" stroke="#3b3a39" stroke-width="1.3"/><path d="M412.4 55.4 V66.6 Q412.4 69.4 418.6 69.4 Q424.8 69.4 424.8 66.6 V55.4" fill="#fafafa" stroke="#d86613" stroke-width="1.3"/><ellipse cx="418.6" cy="55.4" rx="6.2" ry="2.8" fill="#fafafa" stroke="#d86613" stroke-width="1.3"/><path d="M412.4 59.4 Q412.4 62 418.6 62 Q424.8 62 424.8 59.4 M412.4 63 Q412.4 65.6 418.6 65.6 Q424.8 65.6 424.8 63" fill="none" stroke="#d86613" stroke-width="1.2"/><path d="M464.6 40.4 H477.6 L484.6 47.4 V67.4 H464.6 Z" fill="#fafafa" stroke="#3b3a39" stroke-width="1.3"/><path d="M477.6 40.4 V47.4 H484.6" fill="none" stroke="#3b3a39" stroke-width="1.3"/><path d="M478.6 55.6 V66.6 Q478.6 69.4 484.6 69.4 Q490.6 69.4 490.6 66.6 V55.6" fill="#fafafa" stroke="#d86613" stroke-width="1.3"/><ellipse cx="484.6" cy="55.6" rx="6" ry="2.8" fill="#fafafa" stroke="#d86613" stroke-width="1.3"/><rect x="505.6" y="40.4" width="27.0" height="27.000000000000007" fill="#fafafa" stroke="#3b3a39" stroke-width="1.3"/><rect x="506.20000000000005" y="41.0" width="25.8" height="3.6" fill="#c8c6c4"/><path d="M505.6 44.6 H532.6" stroke="#3b3a39" stroke-width="1.3"/><path d="M514.6 44.6 V67.4" stroke="#3b3a39" stroke-width="1.2"/><path d="M523.6 44.6 V67.4" stroke="#3b3a39" stroke-width="1.2"/><path d="M505.6 52.2 H532.6" stroke="#3b3a39" stroke-width="1.2"/><path d="M505.6 59.8 H532.6" stroke="#3b3a39" stroke-width="1.2"/><rect x="503" y="39" width="11" height="13.6" fill="#f3f2f1"/><path d="M510.6 38.2 V52.8 M503.2 45.5 H518" stroke="#2e9e4a" stroke-width="1.5"/><g fill="none" stroke="#3b3a39" stroke-width="1.25" stroke-linecap="round" stroke-linejoin="round"><path d="M566.2 61.8 Q564.6 63.8 562.2 63.6 C556.6 61.4 555.4 50.4 561.6 45.8 C567.4 41.6 575.2 43 577.8 48.4 C580 53.4 577.8 57.6 574.2 58.6"/><path d="M575.4 45.6 Q576.8 43.8 579.2 43.4 C583.8 43.6 585.8 49.6 584.2 54.6 C581.8 61.8 574.2 66.2 568.4 63.8 C563.8 61.6 562 55.6 565 51.4 C567.6 48 571.8 47.8 573.6 49.6"/><circle cx="571.2" cy="54" r="4.4"/></g><path d="M625.6 40.4 H638.6 L645.6 47.4 V67.4 H625.6 Z" fill="#fafafa" stroke="#3b3a39" stroke-width="1.3"/><path d="M638.6 40.4 V47.4 H645.6" fill="none" stroke="#3b3a39" stroke-width="1.3"/><circle cx="644.6" cy="62.2" r="7" fill="#fafafa" stroke="#2b88d8" stroke-width="1.5"/><path d="M644.4 57.6 V62.6 H648" fill="none" stroke="#3b3a39" stroke-width="1.3"/><rect x="725.6" y="40.4" width="27.0" height="27.000000000000007" fill="#fafafa" stroke="#3b3a39" stroke-width="1.3"/><rect x="726.2" y="41.0" width="25.8" height="3.6" fill="#c8c6c4"/><path d="M725.6 44.6 H752.6" stroke="#3b3a39" stroke-width="1.3"/><path d="M734.6 44.6 V67.4" stroke="#3b3a39" stroke-width="1.2"/><path d="M743.6 44.6 V67.4" stroke="#3b3a39" stroke-width="1.2"/><path d="M725.6 52.2 H752.6" stroke="#3b3a39" stroke-width="1.2"/><path d="M725.6 59.8 H752.6" stroke="#3b3a39" stroke-width="1.2"/><path d="M751.8 49.3 L736.6 63.9 L734.6 69.0 L739.8 67.2 L755.0 52.7 Z" fill="#fff" stroke="#2b88d8" stroke-width="1.3" stroke-linejoin="round"/><path d="M736.6 63.9 L734.6 69.0 L739.8 67.2 Z" fill="#2b88d8"/><path d="M749.6 51.4 L752.8 54.7" stroke="#2b88d8" stroke-width="1.2"/><path d="M806.6 40.4 H819.6 L826.6 47.4 V67.4 H806.6 Z" fill="#fafafa" stroke="#3b3a39" stroke-width="1.3"/><path d="M819.6 40.4 V47.4 H826.6" fill="none" stroke="#3b3a39" stroke-width="1.3"/><circle cx="825.6" cy="62.4" r="8.6" fill="#f3f2f1"/><path d="M819.4 60.4 A6.6 6.6 0 0 1 831.6 59.4 M831.8 64.4 A6.6 6.6 0 0 1 819.6 65.6" fill="none" stroke="#2e9e4a" stroke-width="1.5"/><path d="M832 55.4 V59.8 H827.6 M819.2 69.4 V65.2 H823.6" fill="none" stroke="#2e9e4a" stroke-width="1.5"/><rect x="925" y="45.4" width="7.6" height="22" fill="#c8c6c4" stroke="#a19f9d" stroke-width="1"/><rect x="916.4" y="40.6" width="8.6" height="26.8" fill="#fafafa" stroke="#3b3a39" stroke-width="1.3"/><rect x="908.6" y="51.4" width="7.8" height="16" fill="#7fbaf0" stroke="#1f6fc0" stroke-width="1.3"/><path d="M929 54.6 V69.6 M921.4 62 H936.6" stroke="#2e9e4a" stroke-width="1.5"/><rect x="993.6" y="42.6" width="28.8" height="22.6" fill="#fafafa" stroke="#3b3a39" stroke-width="1.3"/><rect x="992.0" y="41.0" width="3.2" height="3.2" fill="#2b88d8"/><rect x="1020.8" y="41.0" width="3.2" height="3.2" fill="#2b88d8"/><rect x="992.0" y="63.6" width="3.2" height="3.2" fill="#2b88d8"/><rect x="1020.8" y="63.6" width="3.2" height="3.2" fill="#2b88d8"/><path d="M1002.4 60.6 L1008 47.4 L1013.6 60.6 M1004.4 56 H1011.6" fill="none" stroke="#2b88d8" stroke-width="1.4"/><rect x="1096.6" y="45.6" width="8" height="21.6" fill="#fafafa" stroke="#3b3a39" stroke-width="1.3"/><rect x="1088.6" y="40.6" width="8" height="26.6" fill="#fafafa" stroke="#3b3a39" stroke-width="1.3"/><rect x="1080.6" y="51.6" width="8" height="15.6" fill="#fafafa" stroke="#3b3a39" stroke-width="1.3"/><path d="M1106.0 48.4 L1090.5 63.8 L1088.6 69.0 L1093.8 67.1 L1109.2 51.6 Z" fill="#fff" stroke="#2b88d8" stroke-width="1.3" stroke-linejoin="round"/><path d="M1090.5 63.8 L1088.6 69.0 L1093.8 67.1 Z" fill="#2b88d8"/><path d="M1103.9 50.5 L1107.1 53.7" stroke="#2b88d8" stroke-width="1.2"/><rect x="1179.6" y="40.6" width="18" height="27" fill="#fafafa" stroke="#3b3a39" stroke-width="1.3"/><rect x="1182.8" y="50.4" width="2.6" height="2.6" fill="#252423"/><rect x="1182.8" y="56.4" width="2.6" height="2.6" fill="#252423"/><rect x="1182.8" y="62.4" width="2.6" height="2.6" fill="#252423"/><rect x="1187.8" y="50.4" width="2.6" height="2.6" fill="#252423"/><rect x="1187.8" y="56.4" width="2.6" height="2.6" fill="#252423"/><rect x="1187.8" y="62.4" width="2.6" height="2.6" fill="#252423"/><rect x="1192.8" y="50.4" width="2.6" height="2.6" fill="#252423"/><rect x="1192.8" y="56.4" width="2.6" height="2.6" fill="#252423"/><rect x="1192.8" y="62.4" width="2.6" height="2.6" fill="#252423"/><rect x="1182.6" y="43.4" width="12" height="4" fill="#7fbaf0" stroke="#2b88d8" stroke-width="1"/><rect x="1227.6" y="40.6" width="18" height="27" fill="#fafafa" stroke="#3b3a39" stroke-width="1.3"/><rect x="1230.8" y="50.4" width="2.6" height="2.6" fill="#252423"/><rect x="1230.8" y="56.4" width="2.6" height="2.6" fill="#252423"/><rect x="1230.8" y="62.4" width="2.6" height="2.6" fill="#252423"/><rect x="1235.8" y="50.4" width="2.6" height="2.6" fill="#252423"/><rect x="1235.8" y="56.4" width="2.6" height="2.6" fill="#252423"/><rect x="1235.8" y="62.4" width="2.6" height="2.6" fill="#252423"/><rect x="1240.8" y="50.4" width="2.6" height="2.6" fill="#252423"/><rect x="1240.8" y="56.4" width="2.6" height="2.6" fill="#252423"/><rect x="1240.8" y="62.4" width="2.6" height="2.6" fill="#252423"/><rect x="1233" y="43.8" width="9.8" height="3.6" fill="#c8c6c4" stroke="#a19f9d" stroke-width=".8"/><path d="M1226 38.4 H1233.8 L1229.6 45.4 H1234 L1222 57.4 L1225.6 48.6 H1221.6 Z" fill="#f7b955" stroke="#e07b10" stroke-width="1.1" stroke-linejoin="round"/><path d="M1331 40.4 H1319.6 V67.6 H1339.6 V56" fill="none" stroke="#a9cff0" stroke-width="1.3"/><g transform="rotate(45 1332.5 52.5)" fill="#f3f2f1" stroke="#a9cff0" stroke-width="1.2"><rect x="1330.4" y="37.6" width="7.2" height="5.4"/><rect x="1328" y="43" width="12" height="5.6" fill="#a9cff0"/><rect x="1329.6" y="52.4" width="8.8" height="13.4"/><rect x="1332.2" y="55" width="3.6" height="8.2"/></g><path d="M1448.8 52.6 V43.4 Q1448.8 40.4 1445.8 40.4 H1441.6 Q1438.6 40.4 1438.6 43.4 V48.4" fill="none" stroke="#3b3a39" stroke-width="1.35"/><path d="M1443.6 67.4 V51.4 Q1443.6 48.4 1440.6 48.4 H1436.4 Q1433.4 48.4 1433.4 51.4 V56.4" fill="none" stroke="#3b3a39" stroke-width="1.35"/><rect x="1428.4" y="56.4" width="10" height="11" rx="2.6" fill="none" stroke="#3b3a39" stroke-width="1.35"/><path d="M1438.4 67.4 H1446.8" stroke="#3b3a39" stroke-width="1.35"/><path d="M1448.4 69.8 V55.2 M1442.4 60.8 L1448.4 54.8 L1454.4 60.8" fill="none" stroke="#2b88d8" stroke-width="1.4"/></svg>
<span class="t" id="t75" style="left:23.45px;top:10.01px;font-size:13.8px;line-height:13.8px;color:#3b3a39;transform:scaleX(0.9759);">Файл</span>
<span class="t" id="t76" style="left:93.85px;top:10.01px;font-size:13.8px;line-height:13.8px;color:#252423;-webkit-text-stroke:0.45px #252423;transform:scaleX(1.0036);">Главная</span>
<span class="t" id="t77" style="left:177.25px;top:10.01px;font-size:13.8px;line-height:13.8px;color:#3b3a39;transform:scaleX(0.9614);">Вставка</span>
<span class="t" id="t78" style="left:258.95px;top:10.01px;font-size:13.8px;line-height:13.8px;color:#3b3a39;transform:scaleX(1.0278);">Моделирование</span>
<span class="t" id="t79" style="left:397.45px;top:10.01px;font-size:13.8px;line-height:13.8px;color:#3b3a39;transform:scaleX(0.9962);">Представление</span>
<span class="t" id="t80" style="left:528.25px;top:10.01px;font-size:13.8px;line-height:13.8px;color:#3b3a39;transform:scaleX(0.9848);">Справка</span>
<span class="t" id="t81" style="left:11.00px;top:75.00px;font-size:12.4px;line-height:12.4px;color:#a9a7a5;transform:scaleX(0.9041);">Вставить</span>
<span class="t" id="t82" style="left:84.80px;top:43.00px;font-size:12.4px;line-height:12.4px;color:#a9a7a5;transform:scaleX(0.9268);">Вырезать</span>
<span class="t" id="t83" style="left:84.80px;top:67.00px;font-size:12.4px;line-height:12.4px;color:#a9a7a5;transform:scaleX(0.9786);">Копировать</span>
<span class="t" id="t84" style="left:84.80px;top:91.00px;font-size:12.4px;line-height:12.4px;color:#a9a7a5;transform:scaleX(0.9776);">Форматирование по образцу</span>
<span class="t" id="t85" style="left:95.99px;top:115.01px;font-size:10.2px;line-height:10.2px;color:#605e5c;transform:scaleX(0.9506);">Буфер обмена</span>
<span class="t" id="t86" style="left:267.50px;top:75.00px;font-size:12.4px;line-height:12.4px;color:#3b3a39;transform:scaleX(0.9729);">Получить</span>
<span class="t" id="t87" style="left:267.30px;top:91.00px;font-size:12.4px;line-height:12.4px;color:#3b3a39;transform:scaleX(0.9537);">данные</span>
<span class="t" id="t88" style="left:327.00px;top:75.00px;font-size:12.4px;line-height:12.4px;color:#3b3a39;transform:scaleX(0.9803);">Книга</span>
<span class="t" id="t89" style="left:329.50px;top:91.00px;font-size:12.4px;line-height:12.4px;color:#3b3a39;transform:scaleX(0.8740);">Excel</span>
<span class="t" id="t90" style="left:365.00px;top:75.00px;font-size:12.4px;line-height:12.4px;color:#3b3a39;transform:scaleX(0.9620);">Наборы данных</span>
<span class="t" id="t91" style="left:385.50px;top:91.00px;font-size:12.4px;line-height:12.4px;color:#3b3a39;transform:scaleX(0.9147);">Power BI</span>
<span class="t" id="t92" style="left:464.00px;top:75.00px;font-size:12.4px;line-height:12.4px;color:#3b3a39;transform:scaleX(0.8667);">SQL</span>
<span class="t" id="t93" style="left:458.30px;top:91.00px;font-size:12.4px;line-height:12.4px;color:#3b3a39;transform:scaleX(0.9094);">Server</span>
<span class="t" id="t94" style="left:497.00px;top:75.00px;font-size:12.4px;line-height:12.4px;color:#3b3a39;transform:scaleX(0.9246);">Введите</span>
<span class="t" id="t95" style="left:497.00px;top:91.00px;font-size:12.4px;line-height:12.4px;color:#3b3a39;transform:scaleX(0.9244);">данные.</span>
<span class="t" id="t96" style="left:545.00px;top:75.00px;font-size:12.4px;line-height:12.4px;color:#3b3a39;transform:scaleX(0.9293);">Dataverse</span>
<span class="t" id="t97" style="left:605.50px;top:75.00px;font-size:12.4px;line-height:12.4px;color:#3b3a39;transform:scaleX(0.9570);">Последние</span>
<span class="t" id="t98" style="left:601.30px;top:91.00px;font-size:12.4px;line-height:12.4px;color:#3b3a39;transform:scaleX(1.0077);">источники</span>
<span class="t" id="t99" style="left:450.59px;top:115.01px;font-size:10.2px;line-height:10.2px;color:#605e5c;transform:scaleX(1.0001);">Данные</span>
<span class="t" id="t100" style="left:692.00px;top:75.00px;font-size:12.4px;line-height:12.4px;color:#3b3a39;transform:scaleX(0.9715);">Преобразование</span>
<span class="t" id="t101" style="left:712.40px;top:91.00px;font-size:12.4px;line-height:12.4px;color:#3b3a39;transform:scaleX(0.9550);">данных</span>
<span class="t" id="t102" style="left:790.00px;top:75.00px;font-size:12.4px;line-height:12.4px;color:#3b3a39;transform:scaleX(0.9676);">Обновить</span>
<span class="t" id="t103" style="left:748.39px;top:115.01px;font-size:10.2px;line-height:10.2px;color:#605e5c;transform:scaleX(0.9738);">Запросы</span>
<span class="t" id="t104" style="left:865.00px;top:75.00px;font-size:12.4px;line-height:12.4px;color:#3b3a39;transform:scaleX(0.9462);">Создать визуальный</span>
<span class="t" id="t105" style="left:898.50px;top:91.00px;font-size:12.4px;line-height:12.4px;color:#3b3a39;transform:scaleX(0.9352);">элемент</span>
<span class="t" id="t106" style="left:981.30px;top:75.00px;font-size:12.4px;line-height:12.4px;color:#3b3a39;transform:scaleX(0.9316);">Текстовое</span>
<span class="t" id="t107" style="left:995.00px;top:91.00px;font-size:12.4px;line-height:12.4px;color:#3b3a39;transform:scaleX(0.9650);">поле</span>
<span class="t" id="t108" style="left:1039.00px;top:75.00px;font-size:12.4px;line-height:12.4px;color:#3b3a39;transform:scaleX(0.9646);">Другие визуальные</span>
<span class="t" id="t109" style="left:1060.00px;top:91.00px;font-size:12.4px;line-height:12.4px;color:#3b3a39;transform:scaleX(0.9347);">элементы</span>
<span class="t" id="t110" style="left:988.39px;top:115.01px;font-size:10.2px;line-height:10.2px;color:#605e5c;transform:scaleX(0.9245);">Вставка</span>
<span class="t" id="t111" style="left:1167.00px;top:75.00px;font-size:12.4px;line-height:12.4px;color:#3b3a39;transform:scaleX(0.9341);">Создать</span>
<span class="t" id="t112" style="left:1175.00px;top:91.00px;font-size:12.4px;line-height:12.4px;color:#3b3a39;transform:scaleX(0.9870);">меру</span>
<span class="t" id="t113" style="left:1215.00px;top:75.00px;font-size:12.4px;line-height:12.4px;color:#3b3a39;transform:scaleX(0.9107);">Быстрая</span>
<span class="t" id="t114" style="left:1223.30px;top:91.00px;font-size:12.4px;line-height:12.4px;color:#3b3a39;transform:scaleX(0.9483);">мера</span>
<span class="t" id="t115" style="left:1185.39px;top:115.01px;font-size:10.2px;line-height:10.2px;color:#605e5c;transform:scaleX(0.9550);">Вычисления</span>
<span class="t" id="t116" style="left:1280.50px;top:75.00px;font-size:12.4px;line-height:12.4px;color:#a9a7a5;transform:scaleX(0.9419);">Чувствительность</span>
<span class="t" id="t117" style="left:1288.59px;top:115.01px;font-size:10.2px;line-height:10.2px;color:#605e5c;transform:scaleX(0.9564);">Чувствительность</span>
<span class="t" id="t118" style="left:1398.50px;top:75.00px;font-size:12.4px;line-height:12.4px;color:#3b3a39;transform:scaleX(0.9748);">Опубликовать</span>
<span class="t" id="t119" style="left:1411.59px;top:115.01px;font-size:10.2px;line-height:10.2px;color:#605e5c;transform:scaleX(0.9565);">Поделиться</span>
</section>
<section id="annotation">
<div class="b" style="left:1389px;top:18px;width:107px;height:110.8px;border:7px solid #ff0000;border-radius:3.5px;box-sizing:border-box;z-index:20;"></div>
<svg class="b" style="left:830px;top:125px;z-index:21" width="560" height="580" viewBox="830 125 560 580"><path d="M849.5 689 L1356 160.8" stroke="#ff0000" stroke-width="7.6" stroke-linecap="round" fill="none"/><path d="M1377.8 136.9 L1347.2 154.4 L1352.6 159.6 L1357.6 164.6 L1361.4 168.7 Z" fill="#ff0000"/></svg>
</section>
</body></html>
